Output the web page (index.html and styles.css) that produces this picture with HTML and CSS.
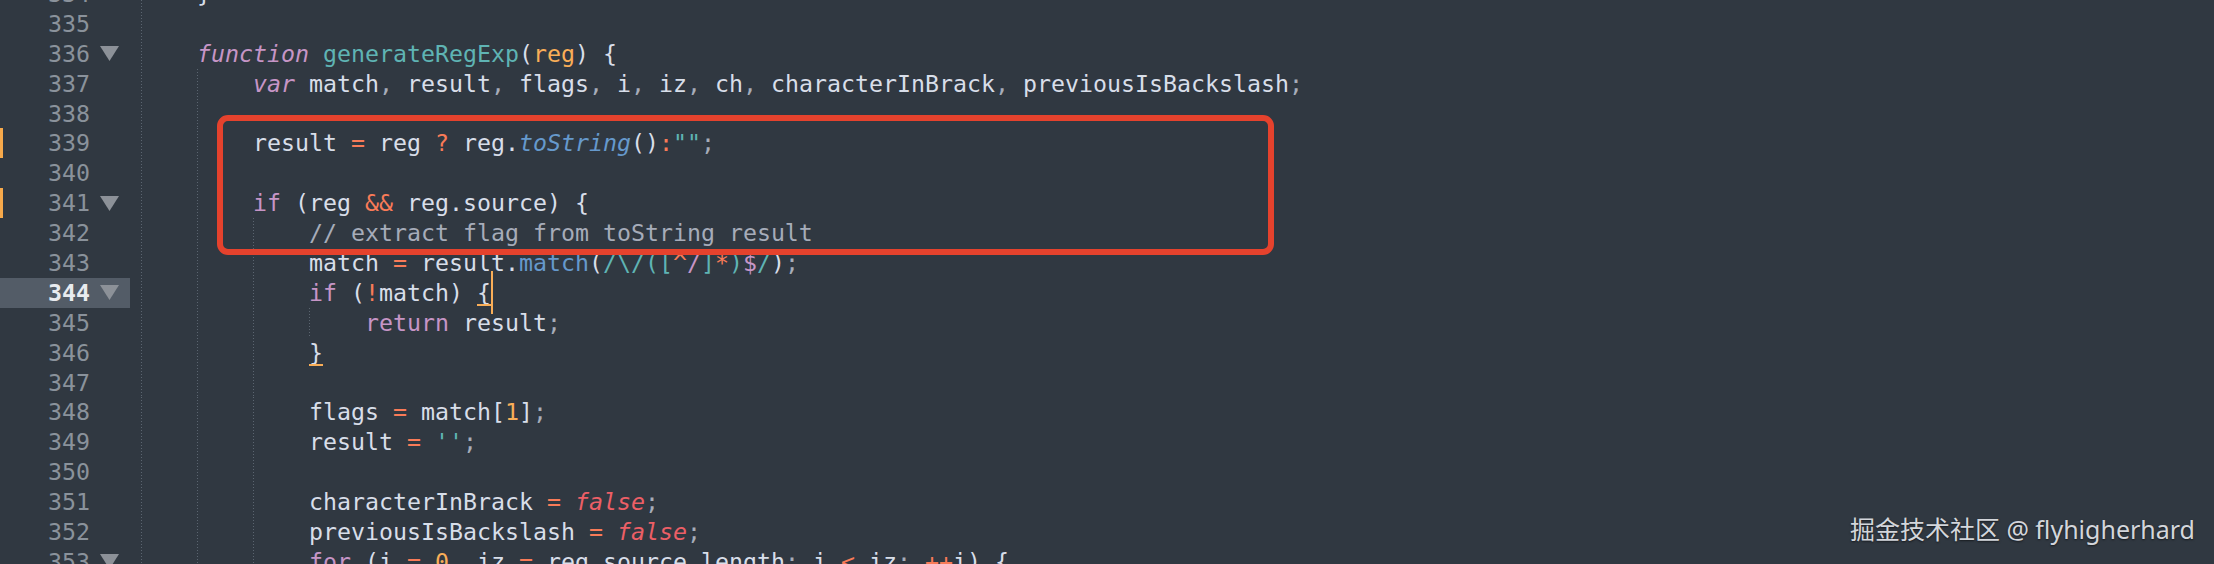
FILE: index.html
```html
<!DOCTYPE html>
<html lang="en">
<head>
<meta charset="utf-8">
<title>generateRegExp</title>
<link rel="stylesheet" href="styles.css">
</head>
<body>
<div class="editor">
  <div class="line"><div class="gutter"><span class="mk"></span><span class="num">334</span><span class="fold"></span></div><div class="code"><i class="g"></i><span class="t"><span class="w">}</span></span></div></div>
  <div class="line"><div class="gutter"><span class="mk"></span><span class="num">335</span><span class="fold"></span></div><div class="code"><i class="g"></i></div></div>
  <div class="line"><div class="gutter"><span class="mk"></span><span class="num">336</span><span class="fold"><svg class="tri" viewBox="0 0 19 15"><polygon points="0,0 19,0 9.5,15"/></svg></span></div><div class="code"><i class="g"></i><span class="t"><span class="ki">function</span> <span class="f">generateRegExp</span><span class="w">(</span><span class="pa">reg</span><span class="w">) {</span></span></div></div>
  <div class="line"><div class="gutter"><span class="mk"></span><span class="num">337</span><span class="fold"></span></div><div class="code"><i class="g"></i><i class="g"></i><span class="t"><span class="ki">var</span> <span class="w">match</span><span class="p">,</span> <span class="w">result</span><span class="p">,</span> <span class="w">flags</span><span class="p">,</span> <span class="w">i</span><span class="p">,</span> <span class="w">iz</span><span class="p">,</span> <span class="w">ch</span><span class="p">,</span> <span class="w">characterInBrack</span><span class="p">,</span> <span class="w">previousIsBackslash</span><span class="p">;</span></span></div></div>
  <div class="line"><div class="gutter"><span class="mk"></span><span class="num">338</span><span class="fold"></span></div><div class="code"><i class="g"></i><i class="g"></i></div></div>
  <div class="line"><div class="gutter"><span class="mk on"></span><span class="num">339</span><span class="fold"></span></div><div class="code"><i class="g"></i><i class="g"></i><span class="t"><span class="w">result</span> <span class="o">=</span> <span class="w">reg</span> <span class="o">?</span> <span class="w">reg.</span><span class="mi">toString</span><span class="w">()</span><span class="o">:</span><span class="s">""</span><span class="p">;</span></span></div></div>
  <div class="line"><div class="gutter"><span class="mk"></span><span class="num">340</span><span class="fold"></span></div><div class="code"><i class="g"></i><i class="g"></i></div></div>
  <div class="line"><div class="gutter"><span class="mk on"></span><span class="num">341</span><span class="fold"><svg class="tri" viewBox="0 0 19 15"><polygon points="0,0 19,0 9.5,15"/></svg></span></div><div class="code"><i class="g"></i><i class="g"></i><span class="t"><span class="k">if</span> <span class="w">(reg</span> <span class="o">&amp;&amp;</span> <span class="w">reg.source) {</span></span></div></div>
  <div class="line"><div class="gutter"><span class="mk"></span><span class="num">342</span><span class="fold"></span></div><div class="code"><i class="g"></i><i class="g"></i><i class="g"></i><span class="t"><span class="c">// extract flag from toString result</span></span></div></div>
  <div class="line"><div class="gutter"><span class="mk"></span><span class="num">343</span><span class="fold"></span></div><div class="code"><i class="g"></i><i class="g"></i><i class="g"></i><span class="t"><span class="w">match</span> <span class="o">=</span> <span class="w">result.</span><span class="m">match</span><span class="w">(</span><span class="s">/\/([</span><span class="o">^</span><span class="k">/</span><span class="s">]</span><span class="o">*</span><span class="s">)</span><span class="k">$</span><span class="s">/</span><span class="w">)</span><span class="p">;</span></span></div></div>
  <div class="line"><div class="gutter cur"><span class="mk"></span><span class="num">344</span><span class="fold"><svg class="tri" viewBox="0 0 19 15"><polygon points="0,0 19,0 9.5,15"/></svg></span></div><div class="code"><i class="g"></i><i class="g"></i><i class="g"></i><span class="t"><span class="k">if</span> <span class="w">(</span><span class="o">!</span><span class="w">match) </span><span class="w br caret">{</span></span></div></div>
  <div class="line"><div class="gutter"><span class="mk"></span><span class="num">345</span><span class="fold"></span></div><div class="code"><i class="g"></i><i class="g"></i><i class="g"></i><i class="g"></i><span class="t"><span class="k">return</span> <span class="w">result</span><span class="p">;</span></span></div></div>
  <div class="line"><div class="gutter"><span class="mk"></span><span class="num">346</span><span class="fold"></span></div><div class="code"><i class="g"></i><i class="g"></i><i class="g"></i><span class="t"><span class="w br">}</span></span></div></div>
  <div class="line"><div class="gutter"><span class="mk"></span><span class="num">347</span><span class="fold"></span></div><div class="code"><i class="g"></i><i class="g"></i><i class="g"></i></div></div>
  <div class="line"><div class="gutter"><span class="mk"></span><span class="num">348</span><span class="fold"></span></div><div class="code"><i class="g"></i><i class="g"></i><i class="g"></i><span class="t"><span class="w">flags</span> <span class="o">=</span> <span class="w">match[</span><span class="n">1</span><span class="w">]</span><span class="p">;</span></span></div></div>
  <div class="line"><div class="gutter"><span class="mk"></span><span class="num">349</span><span class="fold"></span></div><div class="code"><i class="g"></i><i class="g"></i><i class="g"></i><span class="t"><span class="w">result</span> <span class="o">=</span> <span class="s">''</span><span class="p">;</span></span></div></div>
  <div class="line"><div class="gutter"><span class="mk"></span><span class="num">350</span><span class="fold"></span></div><div class="code"><i class="g"></i><i class="g"></i><i class="g"></i></div></div>
  <div class="line"><div class="gutter"><span class="mk"></span><span class="num">351</span><span class="fold"></span></div><div class="code"><i class="g"></i><i class="g"></i><i class="g"></i><span class="t"><span class="w">characterInBrack</span> <span class="o">=</span> <span class="b">false</span><span class="p">;</span></span></div></div>
  <div class="line"><div class="gutter"><span class="mk"></span><span class="num">352</span><span class="fold"></span></div><div class="code"><i class="g"></i><i class="g"></i><i class="g"></i><span class="t"><span class="w">previousIsBackslash</span> <span class="o">=</span> <span class="b">false</span><span class="p">;</span></span></div></div>
  <div class="line"><div class="gutter"><span class="mk"></span><span class="num">353</span><span class="fold"><svg class="tri" viewBox="0 0 19 15"><polygon points="0,0 19,0 9.5,15"/></svg></span></div><div class="code"><i class="g"></i><i class="g"></i><i class="g"></i><span class="t"><span class="k">for</span> <span class="w">(i</span> <span class="o">=</span> <span class="n">0</span><span class="p">,</span> <span class="w">iz</span> <span class="o">=</span> <span class="w">reg.source.length</span><span class="p">;</span> <span class="w">i</span> <span class="o">&lt;</span> <span class="w">iz</span><span class="p">;</span> <span class="o">++</span><span class="w">i) {</span></span></div></div>
</div>
<div class="annot"></div>
<div class="mark">掘金技术社区 @ flyhigherhard</div>
</body>
</html>
```

FILE: styles.css
```css
html, body {
  margin: 0;
  padding: 0;
}
body {
  width: 2214px;
  height: 564px;
  overflow: hidden;
  background: #303841;
  position: relative;
  font-family: "DejaVu Sans Mono", "Liberation Mono", monospace;
  font-size: 23.25px;
  color: #d8dee9;
}
.editor {
  display: flex;
  flex-direction: column;
  margin-top: -21px;
}
.line {
  display: flex;
  height: 29.9px;
  line-height: 29.9px;
}
.gutter {
  width: 130px;
  flex: none;
  display: flex;
  align-items: center;
  height: 100%;
}
.gutter.cur {
  background: #535c67;
}
.mk {
  width: 3px;
  height: 100%;
  flex: none;
}
.mk.on {
  background: #f6a94b;
}
.num {
  width: 87px;
  text-align: right;
  color: #8a929b;
  flex: none;
}
.cur .num {
  color: #e8ebef;
  font-weight: bold;
}
.fold {
  width: 40px;
  padding-left: 10px;
  box-sizing: border-box;
  display: flex;
  align-items: center;
  height: 100%;
}
.tri {
  width: 19px;
  height: 15px;
  display: block;
  fill: #8c9198;
}
.code {
  margin-left: 11px;
  display: flex;
  height: 100%;
  white-space: pre;
}
.g {
  width: 4ch;
  flex: none;
  height: 100%;
  background-image: linear-gradient(to bottom, #5b6570 0, #5b6570 1px, transparent 1px, transparent 3px);
  background-size: 1px 3px;
  background-repeat: repeat-y;
  background-position: 0 0;
}
.t {
  white-space: pre;
}
.w { color: #d8dee9; }
.p { color: #a6acb9; }
.k { color: #c695c6; }
.ki { color: #c695c6; font-style: italic; }
.f { color: #5fb4b4; }
.o { color: #f97b58; }
.pa { color: #f9ae58; }
.m { color: #6699cc; }
.mi { color: #6699cc; font-style: italic; }
.s { color: #5fb4b4; }
.n { color: #f9ae58; }
.c { color: #a6acb9; }
.b { color: #ec5f66; font-style: italic; }
.br {
  position: relative;
}
.br::before {
  content: "";
  position: absolute;
  left: 0;
  right: 0;
  bottom: 0;
  height: 2px;
  background: #f9ae58;
}
.caret::after {
  content: "";
  position: absolute;
  right: -2px;
  top: -8px;
  bottom: -8px;
  width: 2px;
  background: #f9ae58;
}
.annot {
  position: absolute;
  left: 217px;
  top: 115px;
  width: 1057px;
  height: 140px;
  box-sizing: border-box;
  border: 6px solid #e5422d;
  border-radius: 11px;
}
.mark {
  position: absolute;
  right: 19px;
  bottom: 20px;
  font-family: "Noto Sans", "Noto Sans CJK SC", sans-serif;
  font-size: 25px;
  line-height: 1.2;
  color: #d3d6db;
  text-shadow: 0 1px 2px rgba(0, 0, 0, 0.55);
  white-space: nowrap;
}
```
